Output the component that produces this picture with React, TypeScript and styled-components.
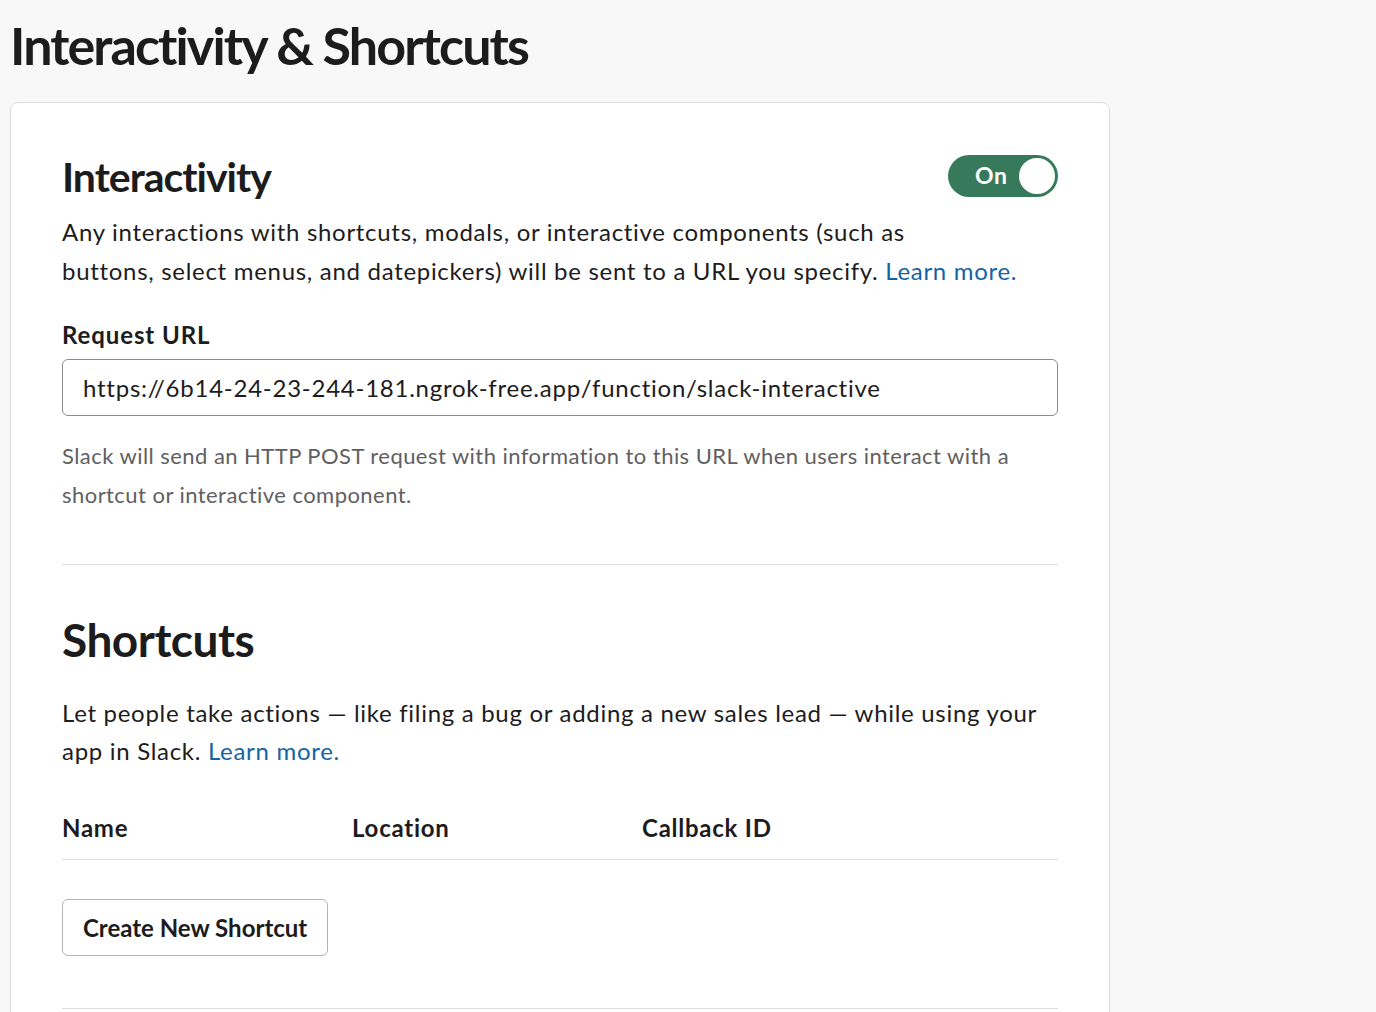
import React from "react";
import styled, { createGlobalStyle } from "styled-components";

const GlobalStyle = createGlobalStyle`
  html, body {
    margin: 0;
    padding: 0;
    background: #f8f8f8;
  }
  body {
    font-family: Lato, "Noto Sans", sans-serif;
    color: #1d1c1d;
  }
`;

const colors = {
  text: "#1d1c1d",
  hint: "#616061",
  link: "#1264a3",
  divider: "#dddddd",
  green: "#367a5b",
};

export default function App() {
  return (
    <>
      <GlobalStyle />
      <Page>
        <PageTitle>Interactivity &amp; Shortcuts</PageTitle>
        <Card>
          <SectionHeader>
            <SectionTitle>Interactivity</SectionTitle>
            <Toggle type="button" aria-pressed="true">
              <ToggleLabel>On</ToggleLabel>
              <Knob />
            </Toggle>
          </SectionHeader>
          <Body>
            Any interactions with shortcuts, modals, or interactive components
            (such as
            <br />
            buttons, select menus, and datepickers) will be sent to a URL you
            specify. <Link href="#">Learn more.</Link>
          </Body>

          <Label htmlFor="request-url">Request URL</Label>
          <Input
            id="request-url"
            defaultValue="https://6b14-24-23-244-181.ngrok-free.app/function/slack-interactive"
          />
          <Hint>
            Slack will send an HTTP POST request with information to this URL
            when users interact with a shortcut or interactive component.
          </Hint>

          <Divider />

          <BigTitle>Shortcuts</BigTitle>
          <Body $top={26} $lh={38}>
            Let people take actions — like filing a bug or adding a new sales
            lead — while using your app in Slack.{" "}
            <Link href="#">Learn more.</Link>
          </Body>

          <TableHead>
            <HeadCell>Name</HeadCell>
            <HeadCell>Location</HeadCell>
            <HeadCell>Callback ID</HeadCell>
          </TableHead>

          <Button type="button">Create New Shortcut</Button>

          <Divider $bottom />
        </Card>
      </Page>
    </>
  );
}

const Page = styled.div`
  padding: 14px 10px 40px;
  min-height: 1012px;
  box-sizing: border-box;
`;

const PageTitle = styled.h1`
  margin: 0 0 26px;
  font-size: 52px;
  line-height: 1.2;
  font-weight: 700;
  letter-spacing: -1.9px;
`;

const Card = styled.div`
  width: 1100px;
  box-sizing: border-box;
  background: #fff;
  border: 1px solid ${colors.divider};
  border-radius: 8px;
  padding: 49px 51px 60px;
`;

const SectionHeader = styled.div`
  display: flex;
  align-items: center;
  justify-content: space-between;
`;

const SectionTitle = styled.h2`
  margin: 0;
  font-size: 41px;
  line-height: 50px;
  font-weight: 700;
  letter-spacing: -1px;
`;

const Toggle = styled.button`
  position: relative;
  width: 110px;
  height: 42px;
  margin-top: -3px;
  border: none;
  border-radius: 21px;
  background: ${colors.green};
  padding: 0;
  cursor: pointer;
  display: flex;
  align-items: center;
  font-family: inherit;
`;

const ToggleLabel = styled.span`
  margin-left: 27px;
  margin-top: -1px;
  color: #fff;
  font-size: 23px;
  font-weight: 700;
  letter-spacing: 0.5px;
`;

const Knob = styled.span`
  position: absolute;
  right: 3px;
  top: 3px;
  width: 36px;
  height: 36px;
  border-radius: 50%;
  background: #fff;
`;

const Body = styled.p<{ $top?: number; $lh?: number }>`
  margin: ${(p) => p.$top ?? 10}px 0 0;
  font-size: 24px;
  line-height: ${(p) => p.$lh ?? 39}px;
  letter-spacing: 0.7px;
`;

const Link = styled.a`
  color: ${colors.link};
  text-decoration: none;
`;

const Label = styled.label`
  display: block;
  margin-top: 28px;
  font-size: 24px;
  line-height: 33px;
  font-weight: 700;
  letter-spacing: 0.9px;
`;

const Input = styled.input`
  display: block;
  margin-top: 8px;
  width: 100%;
  height: 57px;
  box-sizing: border-box;
  border: 1px solid #8d8c8d;
  border-radius: 6px;
  padding: 0 20px;
  font-family: inherit;
  font-size: 24px;
  letter-spacing: 0.75px;
  color: ${colors.text};
  outline: none;
`;

const Hint = styled.p`
  margin: 20px 0 0;
  font-size: 22px;
  line-height: 39px;
  letter-spacing: 0.45px;
  color: ${colors.hint};
`;

const Divider = styled.hr<{ $bottom?: boolean }>`
  margin: ${(p) => (p.$bottom ? "52px 0 0" : "50px 0 0")};
  border: none;
  border-top: 1px solid ${colors.divider};
`;

const BigTitle = styled.h2`
  margin: 47px 0 0;
  font-size: 46px;
  line-height: 1.2;
  font-weight: 700;
  letter-spacing: -0.5px;
`;

const TableHead = styled.div`
  display: grid;
  grid-template-columns: 290px 290px 1fr;
  margin-top: 41px;
  padding-bottom: 15px;
  border-bottom: 1px solid ${colors.divider};
`;

const HeadCell = styled.div`
  font-size: 24px;
  line-height: 33px;
  font-weight: 700;
  letter-spacing: 0.75px;
`;

const Button = styled.button`
  display: block;
  margin-top: 39px;
  height: 57px;
  padding: 0 20px;
  background: #fff;
  border: 1px solid #b3b3b3;
  border-radius: 6px;
  font-family: inherit;
  font-size: 24px;
  font-weight: 700;
  color: ${colors.text};
  cursor: pointer;
`;
